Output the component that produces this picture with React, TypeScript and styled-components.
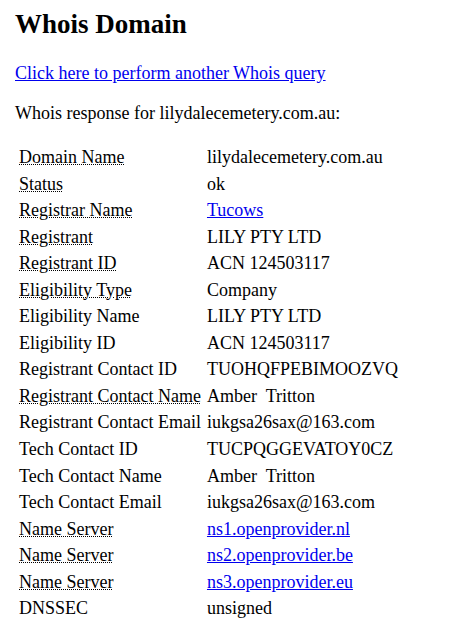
import React from "react";
import styled, { createGlobalStyle } from "styled-components";

const Global = createGlobalStyle`
  html, body { background: #fff; }
  body {
    margin: 0;
    padding: 0 15px;
    font-family: "Liberation Serif", "Times New Roman", serif;
    font-size: 18px;
    color: #000;
  }
`;

const Page = styled.div`
  padding-top: 1px;
`;

const Title = styled.h1`
  font-size: 27px;
  font-weight: bold;
  margin: 8px 0 23px;
`;

const Link = styled.a`
  color: #0000ee;
  text-decoration: underline;
`;

const Para = styled.p`
  margin: 19px 0;
`;

const Table = styled.table`
  border-spacing: 2px;
  font-size: 18px;
  margin-top: 19px;
`;

const Cell = styled.td`
  padding: 2px;
  line-height: 20.55px;
  white-space: nowrap;
`;

const Abbr = styled.abbr`
  text-decoration: underline dotted;
  text-decoration-thickness: 1px;
  text-underline-offset: 1px;
`;

type Row = { label: string; value: string; abbr?: boolean; link?: boolean };

const rows: Row[] = [
  { label: "Domain Name", value: "lilydalecemetery.com.au", abbr: true },
  { label: "Status", value: "ok", abbr: true },
  { label: "Registrar Name", value: "Tucows", abbr: true, link: true },
  { label: "Registrant", value: "LILY PTY LTD", abbr: true },
  { label: "Registrant ID", value: "ACN 124503117", abbr: true },
  { label: "Eligibility Type", value: "Company", abbr: true },
  { label: "Eligibility Name", value: "LILY PTY LTD" },
  { label: "Eligibility ID", value: "ACN 124503117" },
  { label: "Registrant Contact ID", value: "TUOHQFPEBIMOOZVQ" },
  { label: "Registrant Contact Name", value: "Amber\u00a0 Tritton", abbr: true },
  { label: "Registrant Contact Email", value: "iukgsa26sax@163.com" },
  { label: "Tech Contact ID", value: "TUCPQGGEVATOY0CZ" },
  { label: "Tech Contact Name", value: "Amber\u00a0 Tritton" },
  { label: "Tech Contact Email", value: "iukgsa26sax@163.com" },
  { label: "Name Server", value: "ns1.openprovider.nl", abbr: true, link: true },
  { label: "Name Server", value: "ns2.openprovider.be", abbr: true, link: true },
  { label: "Name Server", value: "ns3.openprovider.eu", abbr: true, link: true },
  { label: "DNSSEC", value: "unsigned" },
];

export default function App() {
  return (
    <Page>
      <Global />
      <Title>Whois Domain</Title>
      <Para>
        <Link href="#">Click here to perform another Whois query</Link>
      </Para>
      <Para>Whois response for lilydalecemetery.com.au:</Para>
      <Table>
        <tbody>
          {rows.map((r, i) => (
            <tr key={i}>
              <Cell>{r.abbr ? <Abbr title={r.label}>{r.label}</Abbr> : r.label}</Cell>
              <Cell>{r.link ? <Link href="#">{r.value}</Link> : r.value}</Cell>
            </tr>
          ))}
        </tbody>
      </Table>
    </Page>
  );
}
